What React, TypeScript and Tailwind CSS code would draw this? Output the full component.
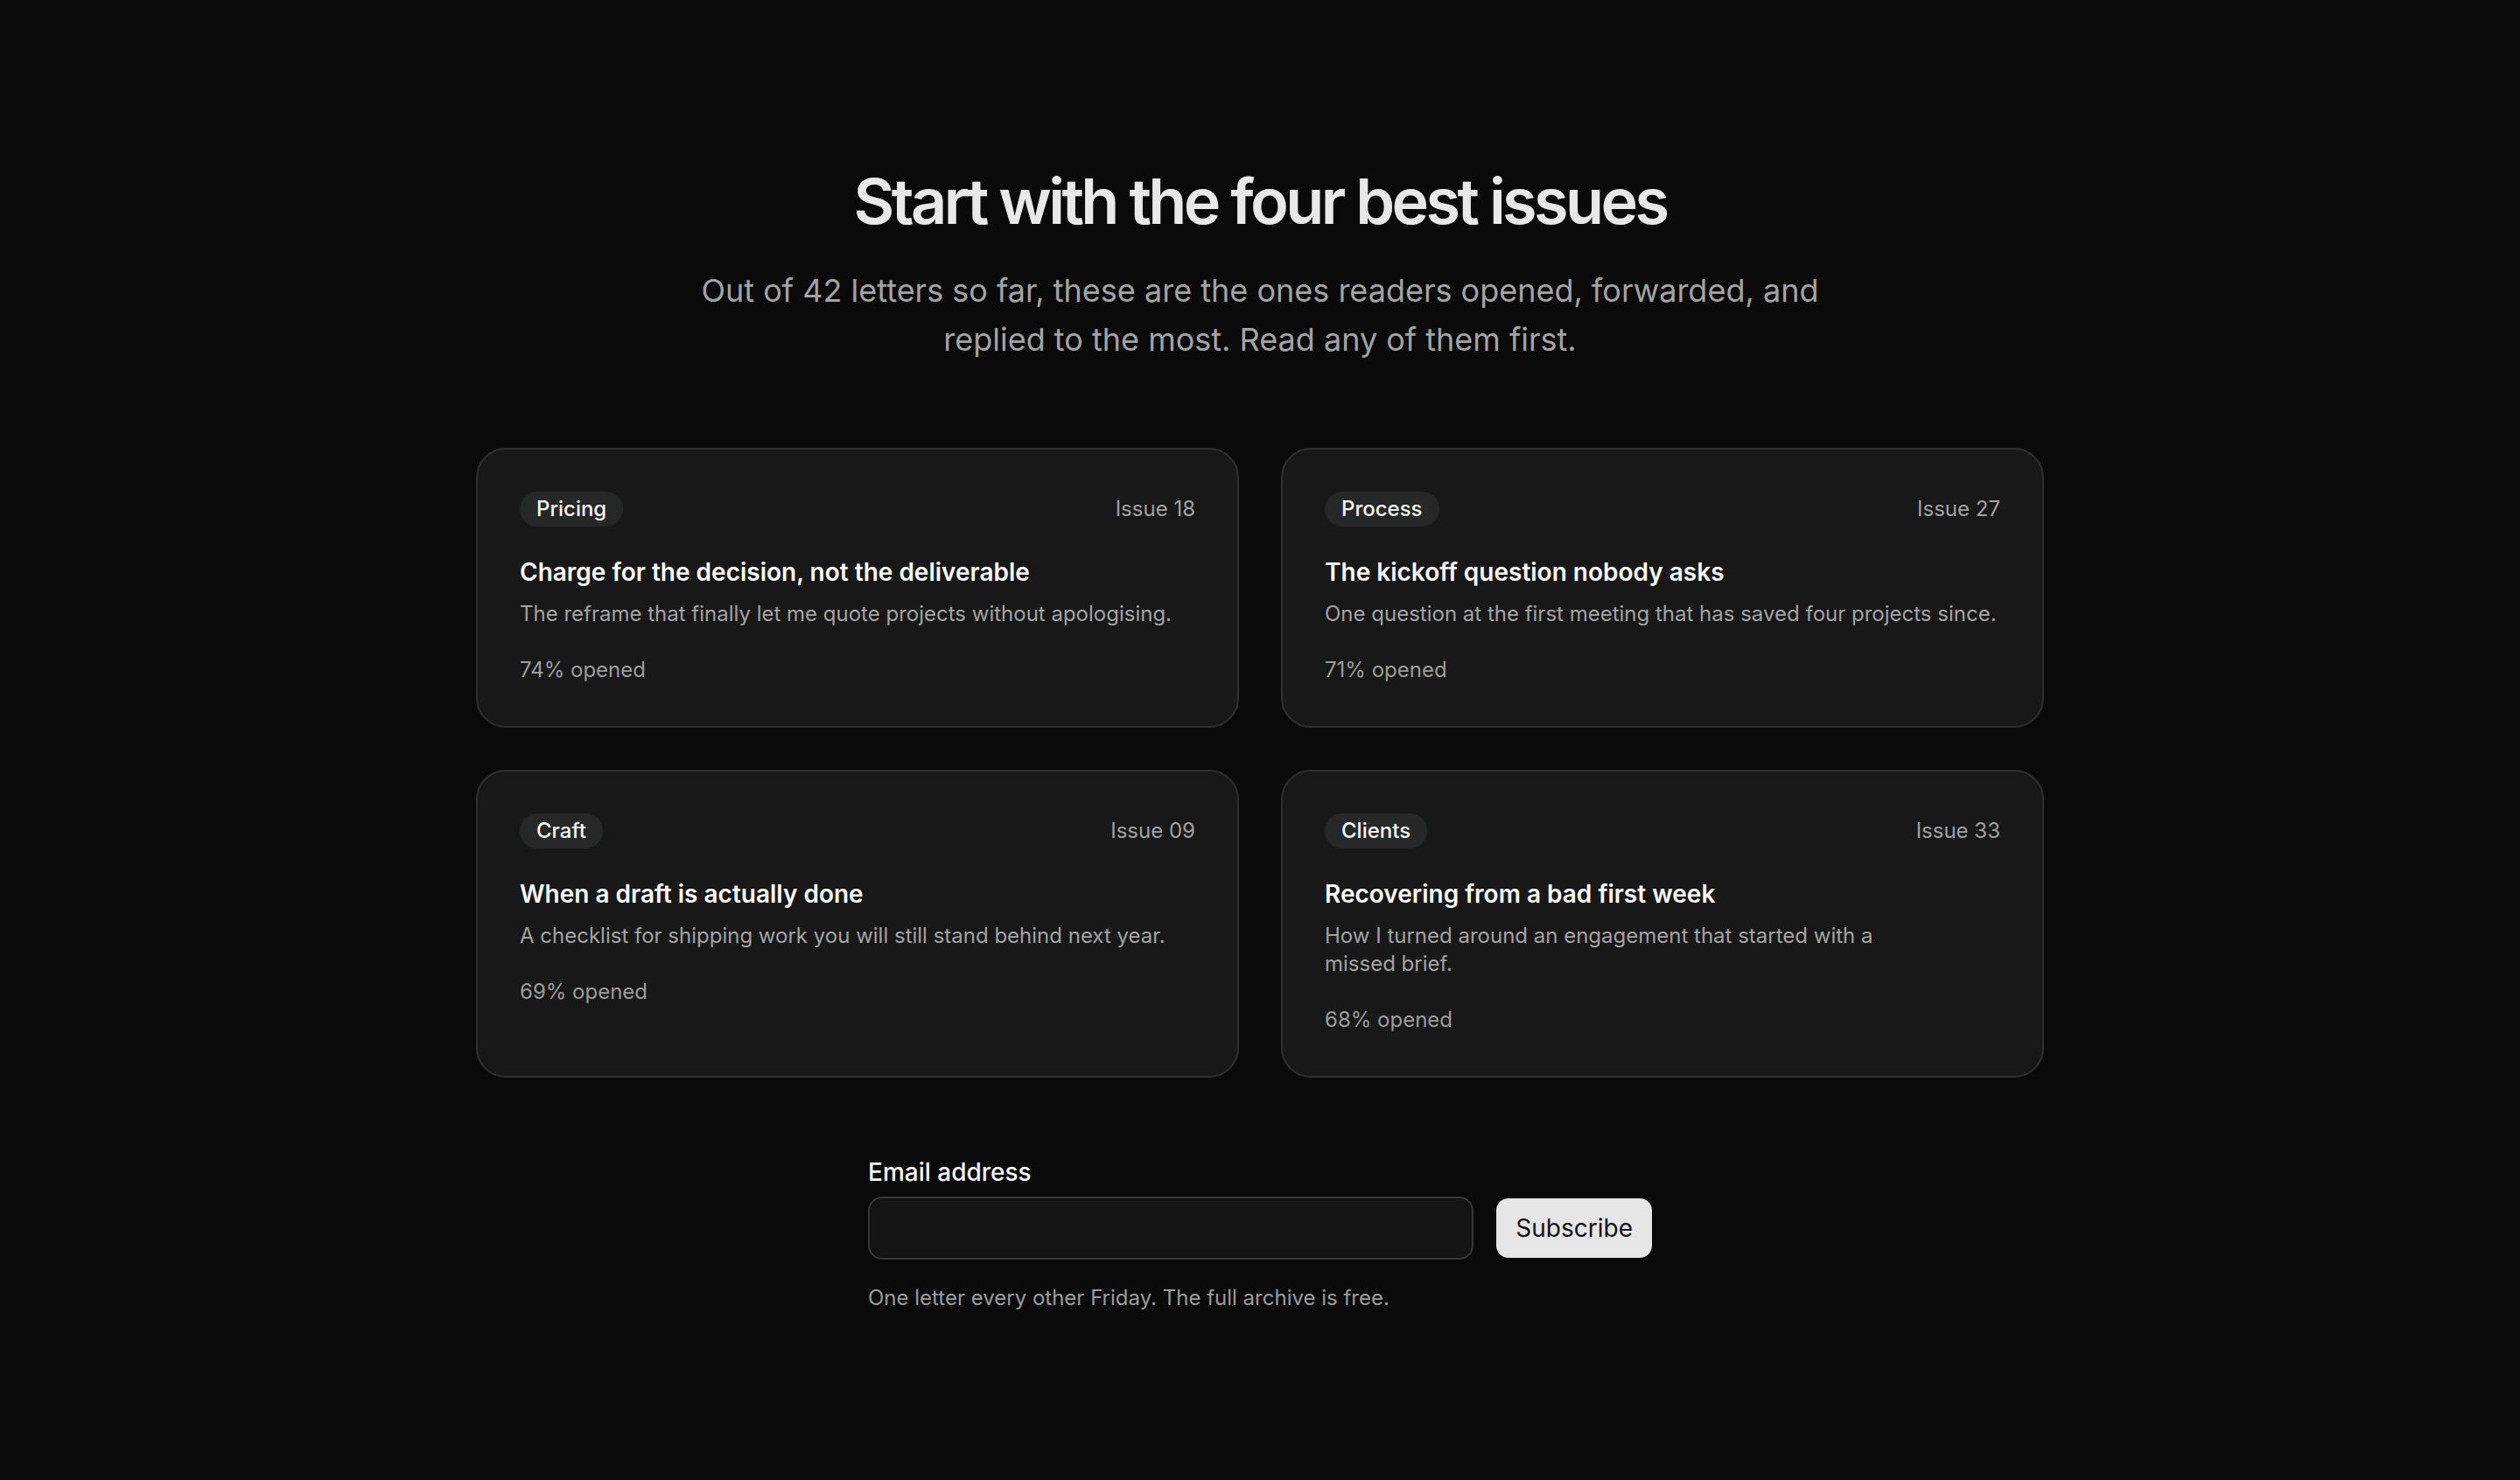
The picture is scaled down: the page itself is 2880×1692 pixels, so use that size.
import React from "react";

type Issue = {
  tag: string;
  issue: string;
  title: string;
  desc: string;
  opened: string;
};

const issues: Issue[] = [
  {
    tag: "Pricing",
    issue: "Issue 18",
    title: "Charge for the decision, not the deliverable",
    desc: "The reframe that finally let me quote projects without apologising.",
    opened: "74% opened",
  },
  {
    tag: "Process",
    issue: "Issue 27",
    title: "The kickoff question nobody asks",
    desc: "One question at the first meeting that has saved four projects since.",
    opened: "71% opened",
  },
  {
    tag: "Craft",
    issue: "Issue 09",
    title: "When a draft is actually done",
    desc: "A checklist for shipping work you will still stand behind next year.",
    opened: "69% opened",
  },
  {
    tag: "Clients",
    issue: "Issue 33",
    title: "Recovering from a bad first week",
    desc: "How I turned around an engagement that started with a missed brief.",
    opened: "68% opened",
  },
];

function Card({ item }: { item: Issue }) {
  return (
    <article className="rounded-[34px] border-2 border-[#303030] bg-[#181818] p-12">
      <div className="flex items-center justify-between">
        <span className="rounded-full bg-[#262727] px-[19px] py-1 text-[24px] font-medium leading-8 text-[#f7f7f7]">
          {item.tag}
        </span>
        <span className="text-[24px] leading-8 text-[#a0a0a0]">{item.issue}</span>
      </div>
      <h3 className="mt-8 text-[28px] font-semibold leading-10 text-[#fafafa]">
        {item.title}
      </h3>
      <p className="mt-3 text-pretty text-[24px] leading-8 text-[#a3a3a3]">
        {item.desc}
      </p>
      <p className="mt-8 text-[24px] leading-8 text-[#9c9c9c]">{item.opened}</p>
    </article>
  );
}

export default function App() {
  return (
    <div
      className="min-h-screen bg-[#0a0a0a] pt-[190px] pb-48"
      style={{ fontFamily: "Inter, 'Noto Sans', sans-serif" }}
    >
      <section className="mx-auto max-w-[1792px]">
        <div className="text-center">
          <h2 className="text-[72px] font-semibold leading-[80px] tracking-tighter text-[#e8e8e8]">
            Start with the four best issues
          </h2>
          <p className="mx-auto mt-[34px] max-w-[1344px] text-[36px] leading-[56px] text-[#a3a3a3]">
            Out of 42 letters so far, these are the ones readers opened, forwarded, and
            replied to the most. Read any of them first.
          </p>
        </div>

        <div className="mt-24 grid grid-cols-2 gap-12">
          {issues.map((it) => (
            <Card key={it.issue} item={it} />
          ))}
        </div>

        <form className="mx-auto mt-22 max-w-[896px]" onSubmit={(e) => e.preventDefault()}>
          <label className="block text-[28px] font-medium leading-10 text-[#f7f7f7]">
            Email address
          </label>
          <div className="mt-2 flex items-center gap-[26px]">
            <input
              type="email"
              className="h-18 min-w-0 flex-1 rounded-2xl border-2 border-[#383838] bg-[#141414] px-6 text-[28px] text-white outline-none"
            />
            <button
              type="submit"
              className="h-[68px] rounded-[14px] bg-[#e6e6e6] px-[22px] text-[28px] text-[#111111]"
            >
              Subscribe
            </button>
          </div>
          <p className="mt-7 text-[24px] leading-8 text-[#9c9c9c]">
            One letter every other Friday. The full archive is free.
          </p>
        </form>
      </section>
    </div>
  );
}
